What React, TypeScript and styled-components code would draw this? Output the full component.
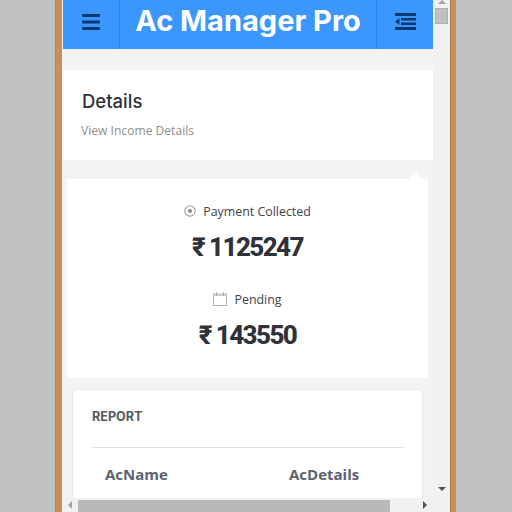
import React from "react";
import styled, { createGlobalStyle } from "styled-components";

const GlobalStyle = createGlobalStyle`
  html, body {
    margin: 0;
    padding: 0;
    width: 512px;
    height: 512px;
    overflow: hidden;
    background: #c0c0c0;
    font-family: "Open Sans", "Liberation Sans", sans-serif;
  }
`;

const Stage = styled.div`
  display: flex;
  width: 512px;
  height: 512px;
  padding-left: 55px;
  box-sizing: border-box;
  background: #c0c0c0;
`;

const Frame = styled.div`
  display: flex;
  flex-direction: column;
  width: 401px;
  height: 512px;
  padding: 0 6px 0 7px;
  box-sizing: border-box;
  background: linear-gradient(
    to right,
    #b58452 0 1px,
    #c98f56 1px 7px,
    #f3f3f3 7px 395px,
    #a97a4a 395px 396px,
    #c98f56 396px 401px
  );
`;

const Body = styled.div`
  display: flex;
  height: 498px;
`;

const Page = styled.main`
  width: 371px;
  height: 498px;
  overflow: hidden;
  background: #f3f3f3;
`;

const Header = styled.header`
  display: flex;
  height: 49px;
  margin-left: 1px;
  background: #3b97fd;
`;

const HeaderButton = styled.div<{ $side: "left" | "right" }>`
  display: flex;
  align-items: center;
  justify-content: center;
  width: 57px;
  height: 100%;
  padding-bottom: 6px;
  box-sizing: border-box;
  color: #0b3a70;
  ${(p) =>
    p.$side === "left"
      ? "border-right: 1px solid #2f86e6;"
      : "border-left: 1px solid #2f86e6;"}
`;

const Title = styled.h1`
  flex: 1;
  margin: 0;
  padding-bottom: 7px;
  font-family: Inter, "Liberation Sans", sans-serif;
  font-size: 29px;
  font-weight: 700;
  line-height: 42px;
  text-align: center;
  color: #fff;
  white-space: nowrap;
`;

const IntroCard = styled.section`
  height: 90px;
  margin: 21px 0 19px 1px;
  padding: 19px 19px 0;
  box-sizing: border-box;
  background: #fff;
`;

const IntroTitle = styled.h2`
  margin: 0;
  font-family: Inter, "Liberation Sans", sans-serif;
  font-size: 18.5px;
  font-weight: 500;
  line-height: 24px;
  color: #2f3238;
`;

const IntroSub = styled.p`
  margin: 10px 0 0 -1px;
  font-size: 12.1px;
  line-height: 16px;
  color: #8e8e8e;
`;

const StatsCard = styled.section`
  position: relative;
  display: flex;
  flex-direction: column;
  align-items: center;
  height: 199px;
  margin: 0 5px 11px;
  padding-top: 22px;
  box-sizing: border-box;
  background: #fff;

  &::before {
    content: "";
    position: absolute;
    top: -7px;
    right: 6px;
    border-left: 7px solid transparent;
    border-right: 7px solid transparent;
    border-bottom: 7px solid #fff;
  }
`;

const StatLabel = styled.div`
  display: flex;
  align-items: center;
  gap: 7px;
  height: 20px;
  font-size: 12.4px;
  font-weight: 500;
  color: #3f4247;
`;

const StatValue = styled.div<{ $last?: boolean }>`
  margin: 8px 0 ${(p) => (p.$last ? 0 : "24px")};
  font-family: Roboto, "Noto Sans", "Liberation Sans", sans-serif;
  font-size: 26px;
  font-weight: 800;
  line-height: 36px;
  letter-spacing: -1.6px;
  word-spacing: 0;
  color: #2f3238;
`;

const ReportCard = styled.section`
  margin: 0 10px;
  height: 140px;
  padding: 0 18px 0 19px;
  box-sizing: border-box;
  background: #fff;
  border: 1px solid #e9e9e9;
  border-radius: 3px;
`;

const ReportTitle = styled.h3`
  margin: 0;
  height: 58px;
  border-bottom: 1px solid #dedede;
  padding-top: 19px;
  box-sizing: border-box;
  font-family: Inter, "Liberation Sans", sans-serif;
  font-size: 12.6px;
  font-weight: 700;
  line-height: 16px;
  color: #555a62;
`;

const ReportHead = styled.div`
  display: grid;
  grid-template-columns: 184px 1fr;
  padding: 14px 0 0 13px;
  font-size: 15px;
  font-weight: 700;
  line-height: 24px;
  color: #5b6270;
`;

const VScroll = styled.div`
  display: flex;
  flex-direction: column;
  align-items: center;
  width: 17px;
  height: 498px;
  padding-bottom: 7px;
  box-sizing: border-box;
  background: #f1f1f1;
`;

const Arrow = styled.span<{ $dir: "up" | "down" | "left" | "right" }>`
  width: 0;
  height: 0;
  flex: none;
  ${(p) =>
    p.$dir === "up"
      ? "border-left: 4px solid transparent; border-right: 4px solid transparent; border-bottom: 4px solid #a3a3a3;"
      : p.$dir === "down"
      ? "border-left: 4px solid transparent; border-right: 4px solid transparent; border-top: 4px solid #505050;"
      : p.$dir === "left"
      ? "border-top: 4px solid transparent; border-bottom: 4px solid transparent; border-right: 4px solid #a3a3a3;"
      : "border-top: 4px solid transparent; border-bottom: 4px solid transparent; border-left: 4px solid #505050;"}
`;

const VThumb = styled.div`
  width: 13px;
  height: 16px;
  margin-top: 4px;
  box-sizing: border-box;
  background: #c1c1c1;
  border: 1px solid #b2b2b2;
`;

const Spacer = styled.div`
  flex: 1;
`;

const HScroll = styled.div`
  display: flex;
  align-items: center;
  height: 14px;
  padding: 0 23px 0 6px;
  box-sizing: border-box;
  background: #f1f1f1;
`;

const HThumb = styled.div`
  width: 312px;
  height: 12px;
  margin: 2px 0 0 6px;
  background: #b9b9b9;
`;

const Hamburger = () => (
  <svg width="18" height="16" viewBox="0 0 18 16" fill="currentColor">
    <rect x="0" y="0" width="18" height="3" rx="1" />
    <rect x="0" y="6.5" width="18" height="3" rx="1" />
    <rect x="0" y="13" width="18" height="3" rx="1" />
  </svg>
);

const Outdent = () => (
  <svg width="21" height="17" viewBox="0 0 21 17" fill="currentColor">
    <rect x="0" y="0" width="21" height="3" />
    <rect x="6" y="5" width="15" height="2.5" />
    <rect x="6" y="9.5" width="15" height="2.5" />
    <rect x="0" y="14" width="21" height="3" />
    <path d="M4.5 5v7L0 8.5z" />
  </svg>
);

const RadioIcon = () => (
  <svg width="12" height="12" viewBox="0 0 12 12">
    <circle cx="6" cy="6" r="5.2" fill="none" stroke="#9a9a9a" strokeWidth="1.1" />
    <circle cx="6" cy="6" r="2" fill="#8a8a8a" />
  </svg>
);

const CalendarIcon = () => (
  <svg width="14" height="14" viewBox="0 0 14 14">
    <rect x="0.5" y="2" width="13" height="11.5" fill="#fff" stroke="#b5b5b5" />
    <rect x="0.5" y="2" width="13" height="2" fill="#d0d0d0" />
    <path d="M3.5 0.5v3M10.5 0.5v3" stroke="#9a9a9a" />
  </svg>
);

export default function App() {
  return (
    <Stage>
      <GlobalStyle />
      <Frame>
        <Body>
          <Page>
            <Header>
              <HeaderButton $side="left">
                <Hamburger />
              </HeaderButton>
              <Title>Ac Manager Pro</Title>
              <HeaderButton $side="right">
                <Outdent />
              </HeaderButton>
            </Header>
            <IntroCard>
              <IntroTitle>Details</IntroTitle>
              <IntroSub>View Income Details</IntroSub>
            </IntroCard>
            <StatsCard>
              <StatLabel>
                <RadioIcon />
                Payment Collected
              </StatLabel>
              <StatValue>₹ 1125247</StatValue>
              <StatLabel>
                <CalendarIcon />
                Pending
              </StatLabel>
              <StatValue $last>₹ 143550</StatValue>
            </StatsCard>
            <ReportCard>
              <ReportTitle>REPORT</ReportTitle>
              <ReportHead>
                <span>AcName</span>
                <span>AcDetails</span>
              </ReportHead>
            </ReportCard>
          </Page>
          <VScroll>
            <Arrow $dir="up" />
            <VThumb />
            <Spacer />
            <Arrow $dir="down" />
          </VScroll>
        </Body>
        <HScroll>
          <Arrow $dir="left" />
          <HThumb />
          <Spacer />
          <Arrow $dir="right" />
        </HScroll>
      </Frame>
    </Stage>
  );
}
